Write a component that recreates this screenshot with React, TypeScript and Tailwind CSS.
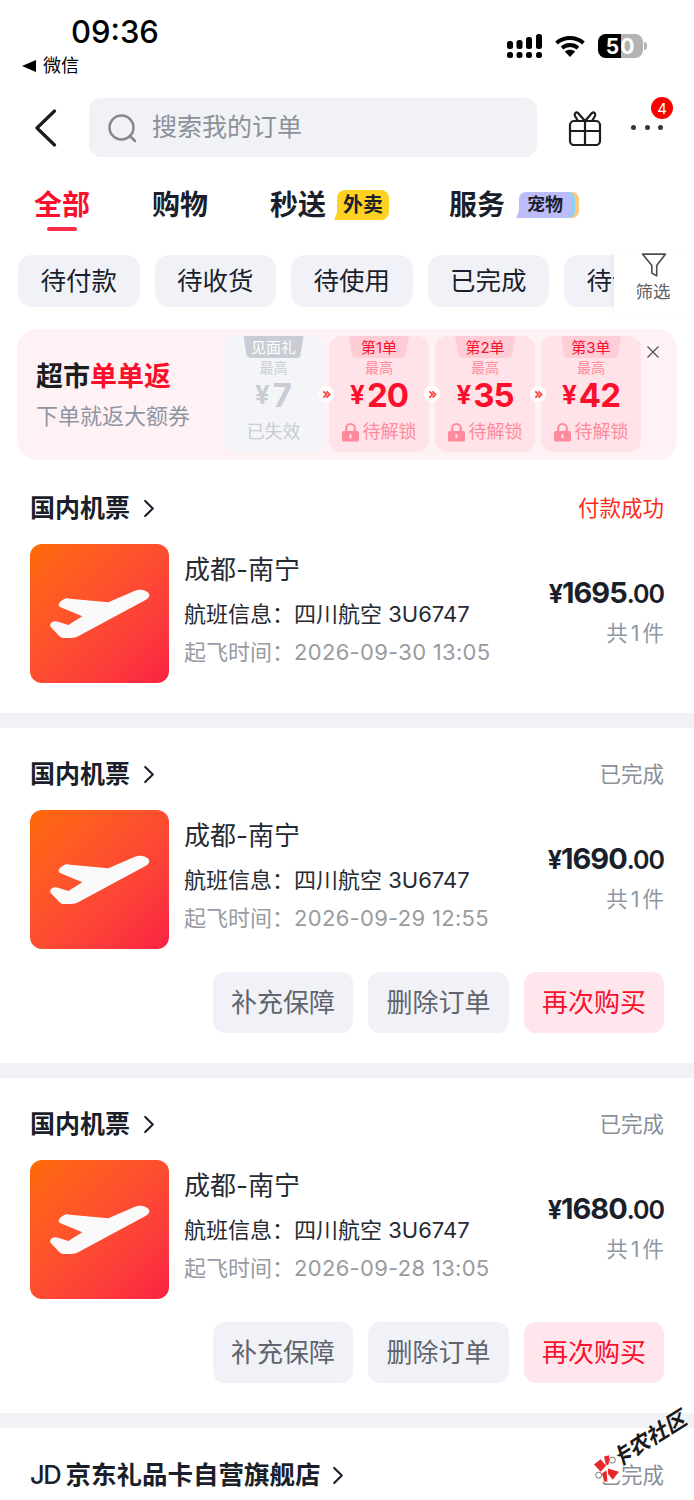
const Plane = () => (
  <svg viewBox="0 0 417 417" className="h-full w-full">
    <path
      d="M330 137C345 137 358 145 358 153C358 160 352 165 345 169L150 274C142 279 135 282 122 282L102 282C96 282 92 280 87 275L63 250C58 244 60 238 68 233C72 231 78 231 84 233L115 243L157 217L92 190C84 186 84 180 92 172L103 165C107 162 112 163 120 164L235 175L313 141C320 138 325 137 330 137Z"
      fill="#fafafa"
    />
  </svg>
);

const Chevron = () => (
  <svg viewBox="0 0 12 20" className="h-[19px] w-[12px]" fill="none">
    <path d="M2 2L10 10L2 18" stroke="#1a1f2b" strokeWidth="2.2" strokeLinecap="round" strokeLinejoin="round" />
  </svg>
);

const Lock = () => (
  <svg viewBox="0 0 16 18" className="h-[20px] w-[17px]">
    <path d="M3 8V5.5a5 5 0 0 1 10 0V8h1.5a1.5 1.5 0 0 1 1.5 1.5v7a1.5 1.5 0 0 1-1.5 1.5h-13A1.5 1.5 0 0 1 0 16.500v-7A1.500 1.500 0 0 1 1.500 8zM5 8h6V5.500a3 3 0 0 0-6 0z" fill="#ff8a9b" fillRule="evenodd" />
    <rect x="7" y="11" width="2" height="4" rx="1" fill="#ffe3e8" />
  </svg>
);

const Signal = () => (
  <svg viewBox="0 0 35 24" className="h-[24px] w-[35px]" fill="#000">
    <rect x="0" y="7" width="6" height="8" rx="2.500" />
    <rect x="0" y="18" width="6" height="6" rx="2.500" />
    <rect x="9.500" y="6" width="6" height="9" rx="2.500" />
    <rect x="9.500" y="18" width="6" height="6" rx="2.500" />
    <rect x="19" y="3" width="6" height="12" rx="2.500" />
    <rect x="19" y="18" width="6" height="6" rx="2.500" />
    <rect x="29" y="0" width="6" height="15" rx="2.500" />
    <rect x="29" y="18" width="6" height="6" rx="2.500" />
  </svg>
);

const Wifi = () => (
  <svg viewBox="0 0 30 22" className="h-[22px] w-[30px]" fill="none" stroke="#000" strokeWidth="3.800">
    <path d="M1.500 8C9 1.300 21 1.300 28.500 8" />
    <path d="M7 13C11.500 9 18.500 9 23 13" />
    <path d="M15 22L9.800 16.500C12.800 14 17.200 14 20.200 16.500Z" fill="#000" stroke="none" />
  </svg>
);

const Arrow = () => (
  <div className="absolute top-[50px] -right-[11px] z-10 flex h-[16px] w-[16px] items-center justify-center rounded-full bg-white">
    <svg viewBox="0 0 10 10" className="h-[9px] w-[9px]" fill="none" stroke="#ff3b30" strokeWidth="1.800">
      <path d="M1.500 1.500L5 5L1.500 8.500" />
      <path d="M5 1.500L8.500 5L5 8.500" />
    </svg>
  </div>
);

const Tag = ({ label, muted }: { label: string; muted?: boolean }) => (
  <div
    className={`mx-auto flex h-[22px] w-[60px] items-center justify-center rounded-b-[8px] text-[15px] leading-none [clip-path:polygon(0_0,100%_0,94%_100%,6%_100%)] ${
      muted ? "bg-[#c9ccd4] text-white" : "bg-[#ffcdd5] text-[#fa0f2d]"
    }`}
  >
    {label}
  </div>
);

const Step = ({ label, amount, last }: { label: string; amount: string; last?: boolean }) => (
  <div className="relative h-[116px] w-[100px] shrink-0 rounded-[12px] bg-[#ffe3e8] text-center">
    <Tag label={label} />
    <div className="mt-[1px] text-[14px] leading-[18px] text-[#ff8a9b]">最高</div>
    <div className="flex h-[36px] items-center justify-center font-bold leading-none tracking-[-1px] text-[#fa0f2d]">
      <span className="mr-[3px] text-[26px]">¥</span>
      <span className="text-[33px]">{amount}</span>
    </div>
    <div className="mt-[7px] flex items-center justify-center gap-[4px] text-[18px] leading-[24px] text-[#ff8a9b]">
      <Lock />
      待解锁
    </div>
    {!last && <Arrow />}
  </div>
);

const Order = ({
  date,
  price,
  status,
  paid,
  actions,
}: {
  date: string;
  price: string;
  status: string;
  paid?: boolean;
  actions?: boolean;
}) => (
  <section className={`border-b-[15px] border-[#f1f2f6] px-[30px] pb-[30px] ${paid ? "pt-[33px]" : "pt-[31px]"}`}>
    <div className="flex h-[30px] items-center justify-between">
      <div className="flex items-center gap-[13px] text-[25px] font-bold leading-[30px] text-[#1a1f2b]">
        国内机票
        <Chevron />
      </div>
      <div className={`text-[21.500px] ${paid ? "text-[#fa2c19]" : "text-[#8b8f98]"}`}>{status}</div>
    </div>
    <div className="mt-[21px] flex">
      <div className="h-[139px] w-[139px] shrink-0 overflow-hidden rounded-[12px] bg-gradient-to-br from-[#ff6a00] to-[#fb1f43]">
        <Plane />
      </div>
      <div className="ml-[15px] flex-1 pt-[9px]">
        <div className="text-[26px] leading-[34px] text-[#262a33]">成都-南宁</div>
        <div className="mt-[12px] text-[22px] leading-[30px] text-[#262a33]">航班信息：四川航空 3U6747</div>
        <div className="mt-[8px] text-[22px] leading-[30px] text-[#999ba1]">
          起飞时间：<span className="tracking-[0.3px]">{date}</span>
        </div>
      </div>
      <div className="pt-[30px] text-right">
        <div className="font-bold leading-[38px] tracking-[-1px] text-[#1a1f2b]">
          <span className="text-[25px]">¥</span>
          <span className="text-[29px]">{price}</span>
          <span className="text-[25px] font-semibold">.00</span>
        </div>
        <div className="mt-[2px] text-[21.500px] leading-[30px] text-[#8f96a3]">
          共<span className="mx-[3px]">1</span>件
        </div>
      </div>
    </div>
    {actions && (
      <div className="mt-[23px] flex justify-end gap-[15px] text-[26px]">
        <div className="flex h-[61px] w-[140px] items-center justify-center rounded-[12px] bg-[#f1f2f7] text-[#60646d]">补充保障</div>
        <div className="flex h-[61px] w-[141px] items-center justify-center rounded-[12px] bg-[#f1f2f7] text-[#60646d]">删除订单</div>
        <div className="flex h-[61px] w-[140px] items-center justify-center rounded-[12px] bg-[#ffe6ec] text-[#fa0f2d]">再次购买</div>
      </div>
    )}
  </section>
);

const chips = ["待付款", "待收货", "待使用", "已完成", "待评价"];

export default function App() {
  return (
    <div className="relative h-[1500px] w-[694px] overflow-hidden bg-white font-['Inter','Noto_Sans_CJK_SC',sans-serif]">
      {/* status bar */}
      <div className="flex h-[98px] justify-between">
        <div className="pl-[22px] pt-[14px]">
          <div className="ml-[49px] text-[31px] font-medium leading-[36px] text-black">09:36</div>
          <div className="mt-[5px] flex items-center gap-[7px] text-[18px] leading-[22px] text-black">
            <svg viewBox="0 0 14 12" className="h-[12px] w-[14px]" fill="#000">
              <path d="M0 6L14 0V12Z" />
            </svg>
            微信
          </div>
        </div>
        <div className="flex items-start pr-[47px] pt-[34px]">
          <Signal />
          <div className="ml-[13px] mt-[1px]">
            <Wifi />
          </div>
          <div className="ml-[13px] flex items-center">
            <div className="relative flex h-[24px] w-[45px] items-center overflow-hidden rounded-[8px] bg-[#b3b3b3]">
              <div className="h-full w-[23px] bg-black" />
              <div className="absolute inset-0 flex items-center justify-center text-[21px] font-bold leading-none tracking-[1px] text-white">50</div>
            </div>
            <div className="ml-[1px] h-[8px] w-[3px] rounded-r-full bg-[#b3b3b3]" />
          </div>
        </div>
      </div>

      {/* nav */}
      <div className="flex h-[59px] items-center pl-[34px]">
        <svg viewBox="0 0 24 38" className="h-[38px] w-[24px]" fill="none">
          <path d="M20.500 2L3 19L20.500 36" stroke="#1d1d1f" strokeWidth="3.200" strokeLinecap="round" strokeLinejoin="round" />
        </svg>
        <div className="ml-[31px] flex h-[59px] w-[448px] items-center rounded-[12px] bg-[#f1f2f6] pl-[18px]">
          <svg viewBox="0 0 30 30" className="h-[30px] w-[30px]" fill="none" stroke="#85878c" strokeWidth="2.500">
            <circle cx="14.500" cy="14.500" r="12" />
            <path d="M23 23L28 28" strokeLinecap="round" />
          </svg>
          <span className="ml-[15px] text-[25px] text-[#8c9099]">搜索我的订单</span>
        </div>
        <svg viewBox="0 0 34 36" className="ml-[31px] h-[36px] w-[34px]" fill="none" stroke="#1d1d1f" strokeWidth="2.200">
          <rect x="2" y="11" width="30" height="24" rx="4" />
          <path d="M2 21H32M17 11V35" />
          <path d="M17 11L10 3C8 1.500 6 3.500 7 6L10 11M17 11L24 3C26 1.500 28 3.500 27 6L24 11" strokeLinejoin="round" />
        </svg>
        <div className="relative ml-[29px] flex w-[32px] justify-between">
          <div className="h-[5px] w-[5px] rounded-full bg-[#33373d]" />
          <div className="h-[5px] w-[5px] rounded-full bg-[#33373d]" />
          <div className="h-[5px] w-[5px] rounded-full bg-[#33373d]" />
          <div className="absolute -top-[28px] left-[20px] flex h-[22px] w-[22px] items-center justify-center rounded-full bg-[#fa0000] text-[15px] leading-none text-white">4</div>
        </div>
      </div>

      {/* tabs */}
      <div className="mt-[33px] flex h-[30px] items-center pl-[34px] text-[28px] font-bold leading-[30px] text-[#1a1f2b]">
        <div className="relative text-[#fa0f2d]">
          全部
          <div className="absolute -bottom-[11px] left-[13px] h-[4px] w-[30px] rounded-full bg-[#fa2c4c]" />
        </div>
        <div className="ml-[62px]">购物</div>
        <div className="ml-[62px]">秒送</div>
        <div className="relative ml-[11px] flex h-[30px] w-[52px] items-center justify-center rounded-[8px] rounded-bl-none bg-[#fdd223] text-[20px] font-bold text-[#1a1f2b]">
          外卖
          <span className="absolute -left-[3px] bottom-0 h-[10px] w-[4px] bg-[#fdd223] [clip-path:polygon(100%_0,100%_100%,0_100%)]" />
        </div>
        <div className="ml-[60px]">服务</div>
        <div className="relative ml-[14px] flex h-[26px] w-[52px] items-center justify-center rounded-[7px] rounded-bl-none bg-[#bcbcfa] text-[18px] font-bold text-[#1a1f2b] shadow-[4px_0_0_#8ed0f8,8px_0_0_#fdc77d]">
          宠物
          <span className="absolute -left-[3px] bottom-0 h-[10px] w-[4px] bg-[#bcbcfa] [clip-path:polygon(100%_0,100%_100%,0_100%)]" />
        </div>
      </div>

      {/* filter chips */}
      <div className="mt-[35px] flex h-[52px] pl-[18px]">
        <div className="flex min-w-0 flex-1 gap-[15px] overflow-hidden">
          {chips.map((c) => (
            <div key={c} className="flex h-[52px] w-[121.500px] shrink-0 items-center justify-center rounded-[14px] bg-[#f1f2f7] text-[25.500px] text-[#1a1f2b]">
              {c}
            </div>
          ))}
        </div>
        <div className="-mt-[4px] flex h-[62px] w-[80px] shrink-0 flex-col items-center bg-white pt-[1px] shadow-[-3px_0_4px_rgba(0,0,0,0.03)]">
          <svg viewBox="0 0 24 24" className="h-[26px] w-[26px]" fill="none" stroke="#4a4d55" strokeWidth="1.500" strokeLinejoin="round">
            <path d="M1.500 2H22.500L14.500 12.500V22L10 19.500V12.500Z" />
          </svg>
          <span className="ml-[-2px] mt-[2px] text-[17.500px] leading-[24px] text-[#5f6168]">筛选</span>
        </div>
      </div>

      {/* rebate banner */}
      <div className="mx-[17px] mt-[22px] flex h-[131px] w-[660px] items-center rounded-[20px] bg-[#fff2f5] pl-[19px]">
        <div className="w-[188px] shrink-0">
          <div className="text-[27px] font-bold leading-[36px] text-[#1d1d1f]">
            超市<span className="text-[#fa0f2d]">单单返</span>
          </div>
          <div className="mt-[6px] text-[22px] leading-[30px] text-[#8f96a3]">下单就返大额券</div>
        </div>
        <div className="mt-[7px] flex gap-[6px] self-start">
          <div className="relative h-[116px] w-[99px] shrink-0 rounded-[12px] bg-[#f4f5f9] text-center">
            <Tag label="见面礼" muted />
            <div className="mt-[1px] text-[14px] leading-[18px] text-[#c9ccd4]">最高</div>
            <div className="flex h-[36px] items-center justify-center font-bold leading-none text-[#c9ccd4]">
              <span className="mr-[3px] text-[26px]">¥</span>
              <span className="text-[33px]">7</span>
            </div>
            <div className="mt-[7px] text-[18px] leading-[24px] text-[#c9ccd4]">已失效</div>
            <Arrow />
          </div>
          <Step label="第1单" amount="20" />
          <Step label="第2单" amount="35" />
          <Step label="第3单" amount="42" last />
        </div>
        <svg viewBox="0 0 14 14" className="mb-[86px] ml-[5px] h-[14px] w-[14px]" fill="none" stroke="#55585f" strokeWidth="1.400">
          <path d="M1.500 1.500L12.500 12.500M12.500 1.500L1.500 12.500" />
        </svg>
      </div>

      <Order paid status="付款成功" date="2026-09-30 13:05" price="1695" />
      <Order actions status="已完成" date="2026-09-29 12:55" price="1690" />
      <Order actions status="已完成" date="2026-09-28 13:05" price="1680" />

      {/* last order, cut off by the page edge */}
      <div className="flex items-center justify-between px-[30px] pt-[31px]">
        <div className="flex items-center gap-[12px] text-[25.500px] font-bold leading-[30px] text-[#1a1f2b]">
          <div>
            <span className="font-medium tracking-[-1.500px]">JD </span>京东礼品卡自营旗舰店
          </div>
          <Chevron />
        </div>
        <div className="text-[21.500px] text-[#8b8f98]">已完成</div>
      </div>

      {/* forum watermark */}
      <div className="absolute left-[594px] top-[1405px] h-[80px] w-[100px]">
        <div className="absolute left-[11px] top-[24px] -rotate-[32deg] whitespace-nowrap text-[21.500px] font-bold italic leading-none text-[#1a1a1a]">卡农社区</div>
        <svg viewBox="0 0 84 80" className="absolute left-0 top-[50px] h-[27px] w-[28px]">
          <rect x="0" y="0" width="84" height="80" rx="20" fill="#fff" />
          <circle cx="55" cy="15" r="9" fill="#fff" stroke="#333" strokeWidth="2" />
          <circle cx="14" cy="60" r="9" fill="#fff" stroke="#333" strokeWidth="2" />
          <path d="M0 28L20 12L36 32L20 50ZM30 4L46 0L44 28L36 30ZM42 40L75 50L56 74L42 56ZM24 54L38 46L40 80L30 78Z" fill="#e6282b" />
        </svg>
      </div>
    </div>
  );
}
